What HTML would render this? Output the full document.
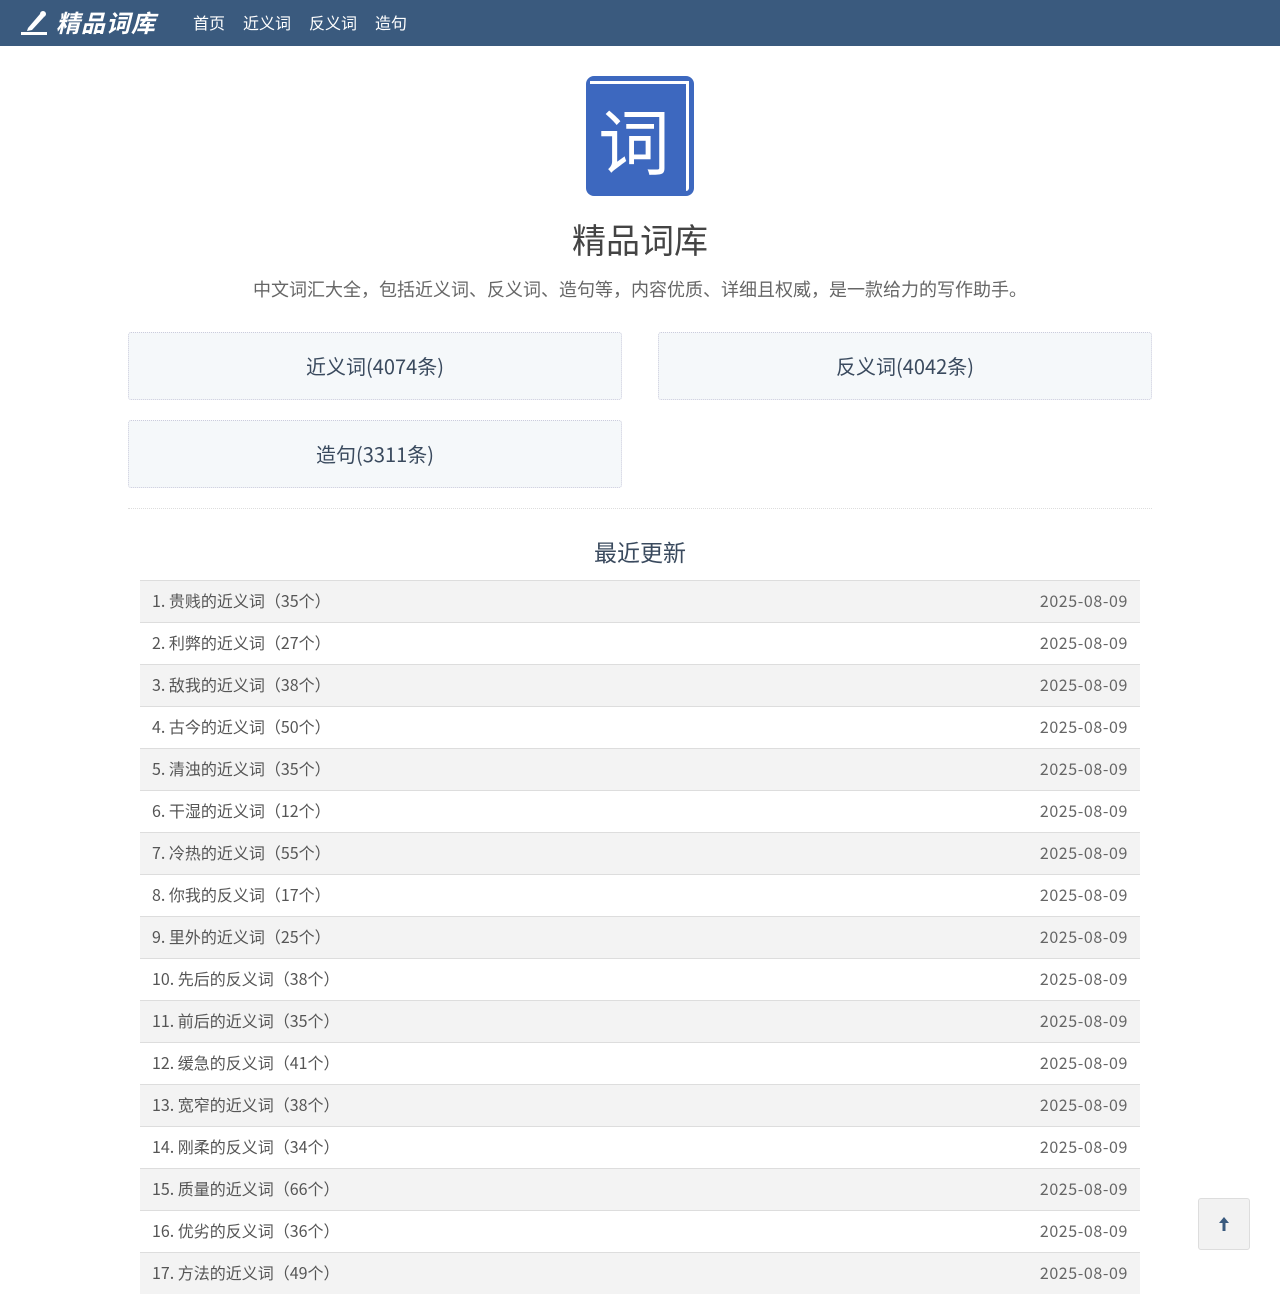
<!DOCTYPE html>
<html><head><meta charset="utf-8"><style>
*{margin:0;padding:0;box-sizing:border-box}
body{width:1280px;height:1280px;overflow:hidden;background:#fff;font-family:"Noto Sans CJK SC","Liberation Sans",sans-serif;color:#333}
.nav{height:46px;background:#3a5a7e;position:relative}
.logo{position:absolute;left:20px;top:4px;color:#fff;font-size:24px;font-weight:bold;font-style:italic;display:flex;align-items:center}
.nav a{position:absolute;top:10px;color:#fff;font-size:16px;line-height:24px;text-decoration:none}
.icon{position:absolute;left:586px;top:76px;width:108px;height:120px;background:#3d68bf;border-radius:8px}
.icon .ln{position:absolute;right:5px;top:5px;bottom:5px;width:3px;background:#fff;border-radius:0 4px 4px 0}
.icon .lt{position:absolute;left:4px;right:5px;top:5px;height:3px;background:#fff}
.icon span{position:absolute;left:12px;top:22px;color:#fff;font-size:72px;line-height:80px}
h1{position:absolute;top:212px;width:1280px;text-align:center;font-weight:normal;font-size:34px;line-height:54px;color:#444}
.desc{position:absolute;top:276px;width:1280px;text-align:center;font-size:18px;line-height:26px;color:#666}
.btn{position:absolute;width:494px;height:68px;background:#f5f8fa;border:1px dotted #ccd;border-radius:3px;text-align:center;line-height:66px;font-size:20px;color:#3a4a5e}
.hr{position:absolute;left:128px;top:508px;width:1024px;border-top:1px dotted #ddd}
h2{position:absolute;top:534px;width:1280px;text-align:center;font-weight:normal;font-size:23px;line-height:34px;color:#3a4a5e}
.list{position:absolute;left:140px;top:580px;width:1000px}
.row{height:42px;line-height:39px;border-top:1px solid #ddd;display:flex;justify-content:space-between;padding:0 12px;font-size:16px;color:#555}
.row span:last-child{color:#666;letter-spacing:0.6px}
.row:nth-child(odd){background:#f3f3f3}
.top{position:absolute;left:1198px;top:1198px;width:52px;height:52px;background:#f2f2f2;border:1px solid #ddd;border-radius:3px}
</style></head><body>
<div class="nav">
<div class="logo"><svg width="30" height="28" viewBox="0 0 30 28"><path d="M8 20 L20 6 L24 9 L12 22 L7 23 Z" fill="#fff"/><circle cx="23" cy="6" r="3" fill="#fff"/><rect x="1" y="24" width="26" height="3" fill="#fff"/></svg><span style="margin-left:6px;letter-spacing:1px">精品词库</span></div>
<a style="left:193px">首页</a><a style="left:243px">近义词</a><a style="left:309px">反义词</a><a style="left:375px">造句</a>
</div>
<div class="icon"><div class="lt"></div><div class="ln"></div><span>词</span></div>
<h1>精品词库</h1>
<div class="desc">中文词汇大全，包括近义词、反义词、造句等，内容优质、详细且权威，是一款给力的写作助手。</div>
<div class="btn" style="left:128px;top:332px">近义词(4074条)</div>
<div class="btn" style="left:658px;top:332px">反义词(4042条)</div>
<div class="btn" style="left:128px;top:420px">造句(3311条)</div>
<div class="hr"></div>
<h2>最近更新</h2>
<div class="list">
<div class="row"><span>1. 贵贱的近义词（35个）</span><span>2025-08-09</span></div>
<div class="row"><span>2. 利弊的近义词（27个）</span><span>2025-08-09</span></div>
<div class="row"><span>3. 敌我的近义词（38个）</span><span>2025-08-09</span></div>
<div class="row"><span>4. 古今的近义词（50个）</span><span>2025-08-09</span></div>
<div class="row"><span>5. 清浊的近义词（35个）</span><span>2025-08-09</span></div>
<div class="row"><span>6. 干湿的近义词（12个）</span><span>2025-08-09</span></div>
<div class="row"><span>7. 冷热的近义词（55个）</span><span>2025-08-09</span></div>
<div class="row"><span>8. 你我的反义词（17个）</span><span>2025-08-09</span></div>
<div class="row"><span>9. 里外的近义词（25个）</span><span>2025-08-09</span></div>
<div class="row"><span>10. 先后的反义词（38个）</span><span>2025-08-09</span></div>
<div class="row"><span>11. 前后的近义词（35个）</span><span>2025-08-09</span></div>
<div class="row"><span>12. 缓急的反义词（41个）</span><span>2025-08-09</span></div>
<div class="row"><span>13. 宽窄的近义词（38个）</span><span>2025-08-09</span></div>
<div class="row"><span>14. 刚柔的反义词（34个）</span><span>2025-08-09</span></div>
<div class="row"><span>15. 质量的近义词（66个）</span><span>2025-08-09</span></div>
<div class="row"><span>16. 优劣的反义词（36个）</span><span>2025-08-09</span></div>
<div class="row"><span>17. 方法的近义词（49个）</span><span>2025-08-09</span></div>
</div>
<div class="top"><svg width="50" height="50" viewBox="0 0 50 50"><path d="M25 18 L20 24 H23.5 V32 H26.5 V24 H30 Z" fill="#3a5a7e"/></svg></div>
</body></html>
